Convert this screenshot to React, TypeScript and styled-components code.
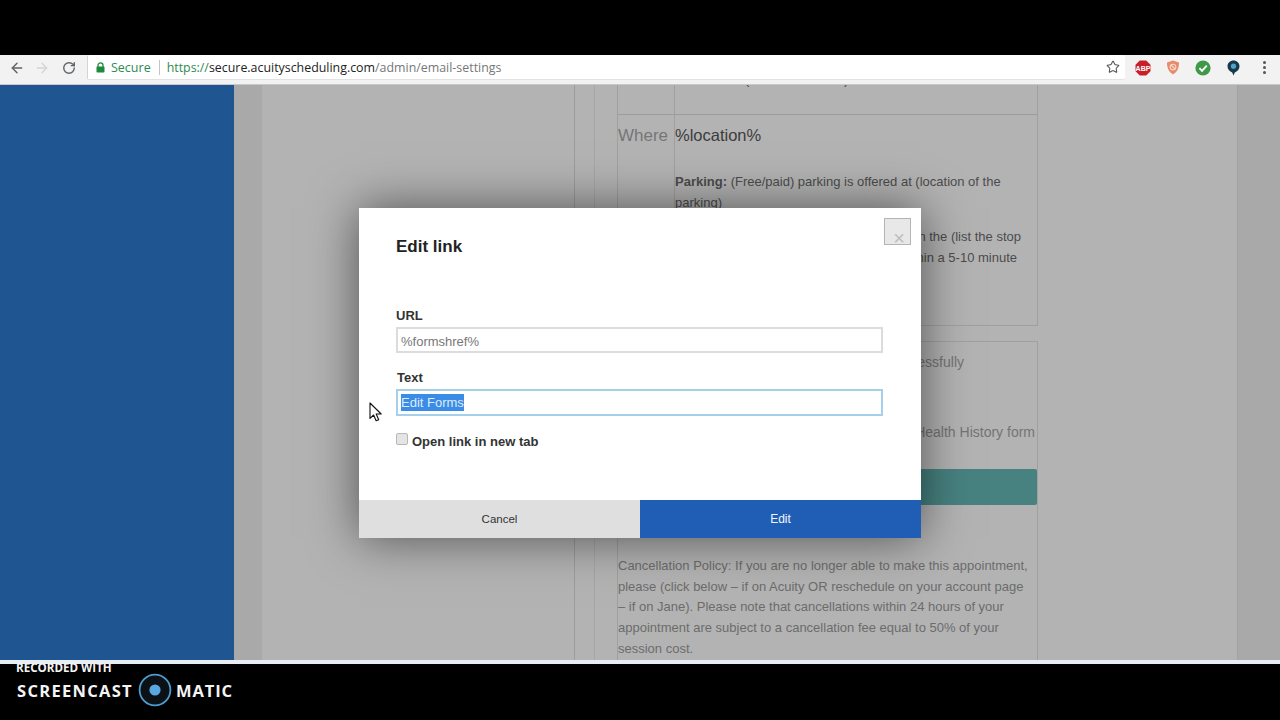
import { ArrowLeft, ArrowRight, RotateCw, Star } from "lucide-react";
import styled, { createGlobalStyle } from "styled-components";

const GlobalStyle = createGlobalStyle`
  html, body {
    margin: 0;
    padding: 0;
    background: #000;
  }
  * {
    box-sizing: border-box;
  }
`;

const LockIcon = () => (
  <svg width="9" height="11" viewBox="0 0 9 11">
    <path d="M2 5V3.4a2.5 2.5 0 0 1 5 0V5" fill="none" stroke="#1e8a3c" strokeWidth="1.3" />
    <rect x="0.5" y="4.6" width="8" height="6" rx="0.8" fill="#1e8a3c" />
  </svg>
);

const AbpIcon = () => (
  <svg width="16" height="16" viewBox="0 0 16 16">
    <path d="M4.8 0.5h6.4l4.3 4.3v6.4l-4.3 4.3H4.8L0.5 11.2V4.8z" fill="#c8202a" />
    <text x="8" y="10.6" textAnchor="middle" fontSize="7" fontWeight="700" fontFamily="Liberation Sans, sans-serif" fill="#fff">
      ABP
    </text>
  </svg>
);

const ShieldIcon = () => (
  <svg width="14" height="15" viewBox="0 0 14 15">
    <path d="M7 0.6l6 2c0 5.4-1.6 9.4-6 11.8C2.6 12 1 8 1 2.6z" fill="#e98a6b" />
    <circle cx="7" cy="7" r="2.8" fill="none" stroke="#f8d9cc" strokeWidth="1.1" />
    <path d="M5 5l4 4" stroke="#f8d9cc" strokeWidth="1.1" />
  </svg>
);

const CheckIcon = () => (
  <svg width="16" height="16" viewBox="0 0 16 16">
    <circle cx="8" cy="8" r="7.6" fill="#3f9a48" />
    <path d="M4.4 8.2l2.6 2.6 4.8-5.2" fill="none" stroke="#fff" strokeWidth="1.9" />
  </svg>
);

const PinIcon = () => (
  <svg width="13" height="16" viewBox="0 0 13 16">
    <path d="M6.5 0.4c3.4 0 6 2.5 6 5.8 0 3.2-2.4 5.2-4.7 6.2L6.5 15.6 5.2 12.4C2.9 11.4 0.5 9.4 0.5 6.2c0-3.3 2.6-5.8 6-5.8z" fill="#17394a" />
    <circle cx="6.5" cy="6.2" r="2.6" fill="#4fa3c7" />
  </svg>
);

const CursorIcon = () => (
  <svg width="14" height="20" viewBox="0 0 14 20">
    <path
      d="M1 1v15.4l3.6-3.4 2.5 5.8 2.6-1.1-2.5-5.7h5z"
      fill="#fff"
      stroke="#111"
      strokeWidth="1.1"
      strokeLinejoin="round"
    />
  </svg>
);

const CastLogo = () => (
  <svg width="34" height="34" viewBox="0 0 34 34">
    <circle cx="17" cy="17" r="15.4" fill="#0b1114" stroke="#4d9ccf" strokeWidth="1.8" />
    <circle cx="17" cy="17" r="5.6" fill="#58a7e2" />
  </svg>
);

export default function App() {
  return (
    <>
      <GlobalStyle />
      <Screen>
        <BlackBand />
        <Toolbar>
          <NavButtons>
            <ArrowLeft size={16} color="#5f6368" strokeWidth={2.2} />
            <ArrowRight size={16} color="#d4d4d4" strokeWidth={2} />
            <RotateCw size={14} color="#5f6368" strokeWidth={2.4} />
          </NavButtons>
          <Omnibox>
            <LockIcon />
            <SecureLabel>Secure</SecureLabel>
            <Divider />
            <Address>
              <Scheme>https://</Scheme>
              <Host>secure.acuityscheduling.com</Host>
              <AddressPath>/admin/email-settings</AddressPath>
            </Address>
            <Star size={14} color="#555" strokeWidth={1.8} />
          </Omnibox>
          <Extensions>
            <AbpIcon />
            <ShieldIcon />
            <CheckIcon />
            <PinIcon />
            <MenuDots>
              <i />
              <i />
              <i />
            </MenuDots>
          </Extensions>
        </Toolbar>

        <Viewport>
          <Sidebar />
          <Main>
            <Gutter>
              <Editor>
                <Inner>
                  <FirstCard>
                    <TopRow>
                      <LabelCell />
                      <ValueCell>
                        <ClippedLine>(Pacific Standard)</ClippedLine>
                      </ValueCell>
                    </TopRow>
                    <Row>
                      <LabelCell>
                        <RowLabel>Where</RowLabel>
                      </LabelCell>
                      <ValueCell>
                        <RowValue>%location%</RowValue>
                        <Para>
                          <b>Parking:</b> (Free/paid) parking is offered at (location of the parking)
                        </Para>
                        <TailLines>
                          <TailLine>Public transit: The nearest station is on the (list the stop</TailLine>
                          <TailLine $inset={4}>closest to the office) and is within a 5-10 minute</TailLine>
                        </TailLines>
                      </ValueCell>
                    </Row>
                  </FirstCard>
                  <SecondCard>
                    <FormNote $inset={73}>Please make sure you have successfully</FormNote>
                    <FormNote $inset={2}>Please complete the Health History form</FormNote>
                    <TealButton />
                  </SecondCard>
                  <PolicyCard>
                    Cancellation Policy: If you are no longer able to make this appointment,
                    please (click below – if on Acuity OR reschedule on your account page
                    – if on Jane). Please note that cancellations within 24 hours of your
                    appointment are subject to a cancellation fee equal to 50% of your
                    session cost.
                  </PolicyCard>
                </Inner>
              </Editor>
            </Gutter>
          </Main>

          <Overlay>
            <Modal>
              <CloseButton>×</CloseButton>
              <ModalBody>
                <Title>Edit link</Title>
                <FieldLabel>URL</FieldLabel>
                <TextField>%formshref%</TextField>
                <FieldLabel $gap={18} $indent={1}>Text</FieldLabel>
                <TextField $focused>
                  <Selected>Edit Forms</Selected>
                </TextField>
                <CheckRow>
                  <CheckBox />
                  <CheckLabel>Open link in new tab</CheckLabel>
                </CheckRow>
              </ModalBody>
              <ModalFooter>
                <CancelButton>Cancel</CancelButton>
                <EditButton>Edit</EditButton>
              </ModalFooter>
            </Modal>
          </Overlay>
          <Pointer>
            <CursorIcon />
          </Pointer>
        </Viewport>

        <Recorder>
          <RecordedWith>RECORDED WITH</RecordedWith>
          <Brand>
            <BrandWord>SCREENCAST</BrandWord>
            <CastLogo />
            <BrandWord>MATIC</BrandWord>
          </Brand>
        </Recorder>
      </Screen>
    </>
  );
}

const Screen = styled.div`
  width: 1280px;
  height: 720px;
  overflow: hidden;
  display: flex;
  flex-direction: column;
  background: #000;
  font-family: "Liberation Sans", Arial, sans-serif;
`;

const BlackBand = styled.div`
  height: 55px;
  flex: none;
  background: #000;
`;

const Toolbar = styled.div`
  height: 30px;
  flex: none;
  display: flex;
  align-items: flex-start;
  background: #f2f2f2;
  border-bottom: 1px solid #c8c8c8;
`;

const NavButtons = styled.div`
  width: 87px;
  height: 25px;
  flex: none;
  display: grid;
  grid-template-columns: 25px 28px 14px;
  align-items: center;
  padding-left: 9px;
`;

const Omnibox = styled.div`
  width: 1038px;
  height: 25px;
  flex: none;
  display: flex;
  align-items: center;
  padding: 0 5px 0 8px;
  background: #fff;
  border-left: 1px solid #d4d4d4;
  border-bottom: 1px solid #e2e2e2;
  border-radius: 2px;
`;

const SecureLabel = styled.span`
  margin-left: 6px;
  font-family: "Open Sans", sans-serif;
  font-size: 12.5px;
  color: #2e8b50;
`;

const Divider = styled.span`
  width: 1px;
  height: 15px;
  margin: 0 7px 0 8px;
  background: #c4c4c4;
`;

const Address = styled.div`
  flex: 1;
  font-family: "Open Sans", sans-serif;
  font-size: 12.4px;
  white-space: nowrap;
`;

const Scheme = styled.span`
  color: #2e8b50;
`;

const Host = styled.span`
  color: #222;
`;

const AddressPath = styled.span`
  color: #777;
`;

const Extensions = styled.div`
  flex: 1;
  height: 25px;
  display: grid;
  grid-template-columns: repeat(5, 30px);
  align-items: center;
  justify-items: center;
  padding-left: 3px;
`;

const MenuDots = styled.div`
  display: flex;
  flex-direction: column;
  gap: 2px;
  margin-left: 2px;

  & i {
    width: 3px;
    height: 3px;
    border-radius: 50%;
    background: #555;
  }
`;

const Viewport = styled.div`
  position: relative;
  height: 575px;
  flex: none;
  display: flex;
  overflow: hidden;
`;

const Sidebar = styled.div`
  width: 234px;
  flex: none;
  background: #1f5590;
`;

const Main = styled.div`
  flex: 1;
  padding-left: 28px;
  background: #a9a9a9;
`;

const Gutter = styled.div`
  width: 976px;
  height: 100%;
  padding-left: 312px;
  background: #b3b3b3;
`;

const Editor = styled.div`
  height: 100%;
  padding-left: 19px;
  border-left: 1px solid #9c9c9c;
  border-right: 1px solid #a2a2a2;
`;

const Inner = styled.div`
  height: 100%;
  padding-left: 22px;
  border-left: 1px solid #a6a6a6;
`;

const FirstCard = styled.div`
  width: 421px;
  height: 241px;
  border: 1px solid #a0a0a0;
  border-top: 0;
`;

const TopRow = styled.div`
  height: 30px;
  display: flex;
  border-bottom: 1px solid #9c9c9c;
`;

const Row = styled.div`
  display: flex;
  height: 210px;
`;

const LabelCell = styled.div`
  width: 56px;
  flex: none;
`;

const ValueCell = styled.div`
  flex: 1;
  min-width: 0;
  border-left: 1px solid #a0a0a0;
`;

const ClippedLine = styled.div`
  margin: -12px 0 0 70px;
  font-size: 13px;
  line-height: 14px;
  color: #444;
`;

const RowLabel = styled.div`
  margin-top: 12px;
  font-size: 17px;
  line-height: 18px;
  color: #767676;
`;

const RowValue = styled.div`
  margin-top: 11px;
  font-size: 16.5px;
  line-height: 18px;
  color: #3c3c3c;
`;

const Para = styled.div`
  margin-top: 28px;
  padding-right: 20px;
  font-size: 13px;
  line-height: 20.5px;
  color: #4c4c4c;
`;

const TailLines = styled.div`
  margin-top: 14px;
  font-size: 13px;
  line-height: 20.5px;
  color: #4c4c4c;
  white-space: nowrap;
`;

const TailLine = styled.div<{ $inset?: number }>`
  display: flex;
  justify-content: flex-end;
  padding-right: ${(props) => 16 + (props.$inset ?? 0)}px;
`;

const SecondCard = styled.div`
  width: 421px;
  height: 175px;
  margin-top: 15px;
  padding: 11px 0 0;
  border: 1px solid #a0a0a0;
  border-bottom: 0;
  display: flex;
  flex-direction: column;
  align-items: flex-end;
  gap: 52px;
`;

const FormNote = styled.div<{ $inset: number }>`
  padding-right: ${(props) => props.$inset}px;
  font-size: 14px;
  line-height: 18px;
  color: #747474;
  white-space: nowrap;
`;

const TealButton = styled.div`
  width: 100%;
  height: 36px;
  margin-top: -24px;
  background: #478280;
  border-radius: 2px;
`;

const PolicyCard = styled.div`
  width: 421px;
  height: 200px;
  padding: 40px 6px 0 0;
  border-left: 1px solid #a0a0a0;
  border-right: 1px solid #a0a0a0;
  font-size: 13px;
  line-height: 20.7px;
  color: #6c6c6c;
`;

const Overlay = styled.div`
  position: absolute;
  inset: 0;
  display: flex;
  justify-content: center;
  padding-top: 123px;
`;

const Modal = styled.div`
  position: relative;
  width: 562px;
  height: 330px;
  display: flex;
  flex-direction: column;
  background: #fff;
  box-shadow: 0 0 46px rgba(0, 0, 0, 0.55);
`;

const CloseButton = styled.div`
  position: absolute;
  top: 10px;
  right: 10px;
  width: 27px;
  height: 27px;
  display: flex;
  justify-content: center;
  padding: 9px 0 0 3px;
  background: #e8e8e8;
  border: 1px solid #b4b4b4;
  font-size: 20px;
  line-height: 20px;
  color: #bdbdbd;
  overflow: hidden;
`;

const ModalBody = styled.div`
  flex: 1;
  padding: 29px 37px 0;
`;

const Title = styled.div`
  margin-bottom: 52px;
  font-size: 17px;
  font-weight: 700;
  line-height: 20px;
  color: #222;
`;

const FieldLabel = styled.div<{ $gap?: number; $indent?: number }>`
  margin-top: ${(props) => props.$gap ?? 0}px;
  margin-bottom: 4px;
  padding-left: ${(props) => props.$indent ?? 0}px;
  font-size: 13px;
  font-weight: 700;
  line-height: 14px;
  color: #333;
`;

const TextField = styled.div<{ $focused?: boolean }>`
  width: 487px;
  height: ${(props) => (props.$focused ? 27 : 26)}px;
  padding: ${(props) => (props.$focused ? 0 : 2)}px 3px 0;
  display: flex;
  align-items: center;
  background: #fff;
  border: ${(props) => (props.$focused ? "2px solid #a6d0ea" : "2px solid #dcdcdc")};
  font-size: 13px;
  color: #777;
`;

const Selected = styled.span`
  padding: 1px 0;
  background: #3b8ce6;
  color: #dcebfb;
`;

const CheckRow = styled.div`
  display: flex;
  align-items: center;
  gap: 4px;
  margin-top: 17px;
`;

const CheckBox = styled.div`
  width: 12px;
  height: 12px;
  margin-top: -4px;
  background: #e4e4e4;
  border: 1px solid #b8b8b8;
  border-radius: 2px;
`;

const CheckLabel = styled.div`
  padding-top: 2px;
  font-size: 13px;
  font-weight: 700;
  line-height: 14px;
  color: #333;
`;

const ModalFooter = styled.div`
  height: 38px;
  flex: none;
  display: flex;
`;

const CancelButton = styled.div`
  flex: 1;
  display: flex;
  align-items: center;
  justify-content: center;
  padding-bottom: 1px;
  background: #dfdfdf;
  font-size: 11.5px;
  color: #333;
`;

const EditButton = styled.div`
  flex: 1;
  display: flex;
  align-items: center;
  justify-content: center;
  background: #205eb5;
  font-size: 12px;
  color: #f2f6fc;
`;

const Pointer = styled.div`
  position: absolute;
  left: 369px;
  top: 317px;
  line-height: 0;
`;

const Recorder = styled.div`
  flex: 1;
  min-height: 0;
  padding: 0 0 0 16px;
  background: #000;
  border-top: 4px solid #e8eef3;
  color: #f4f4f4;
  font-family: "Open Sans", sans-serif;
`;

const RecordedWith = styled.div`
  font-size: 11.6px;
  font-weight: 700;
  line-height: 8px;
  height: 8px;
`;

const Brand = styled.div`
  display: flex;
  align-items: center;
  margin-top: 1px;
`;

const BrandWord = styled.span`
  font-size: 16.5px;
  font-weight: 700;
  letter-spacing: 1.3px;
  margin-left: 1px;
  margin-right: 5px;

  &:last-child {
    margin-left: 4px;
    letter-spacing: 0.9px;
  }
`;
